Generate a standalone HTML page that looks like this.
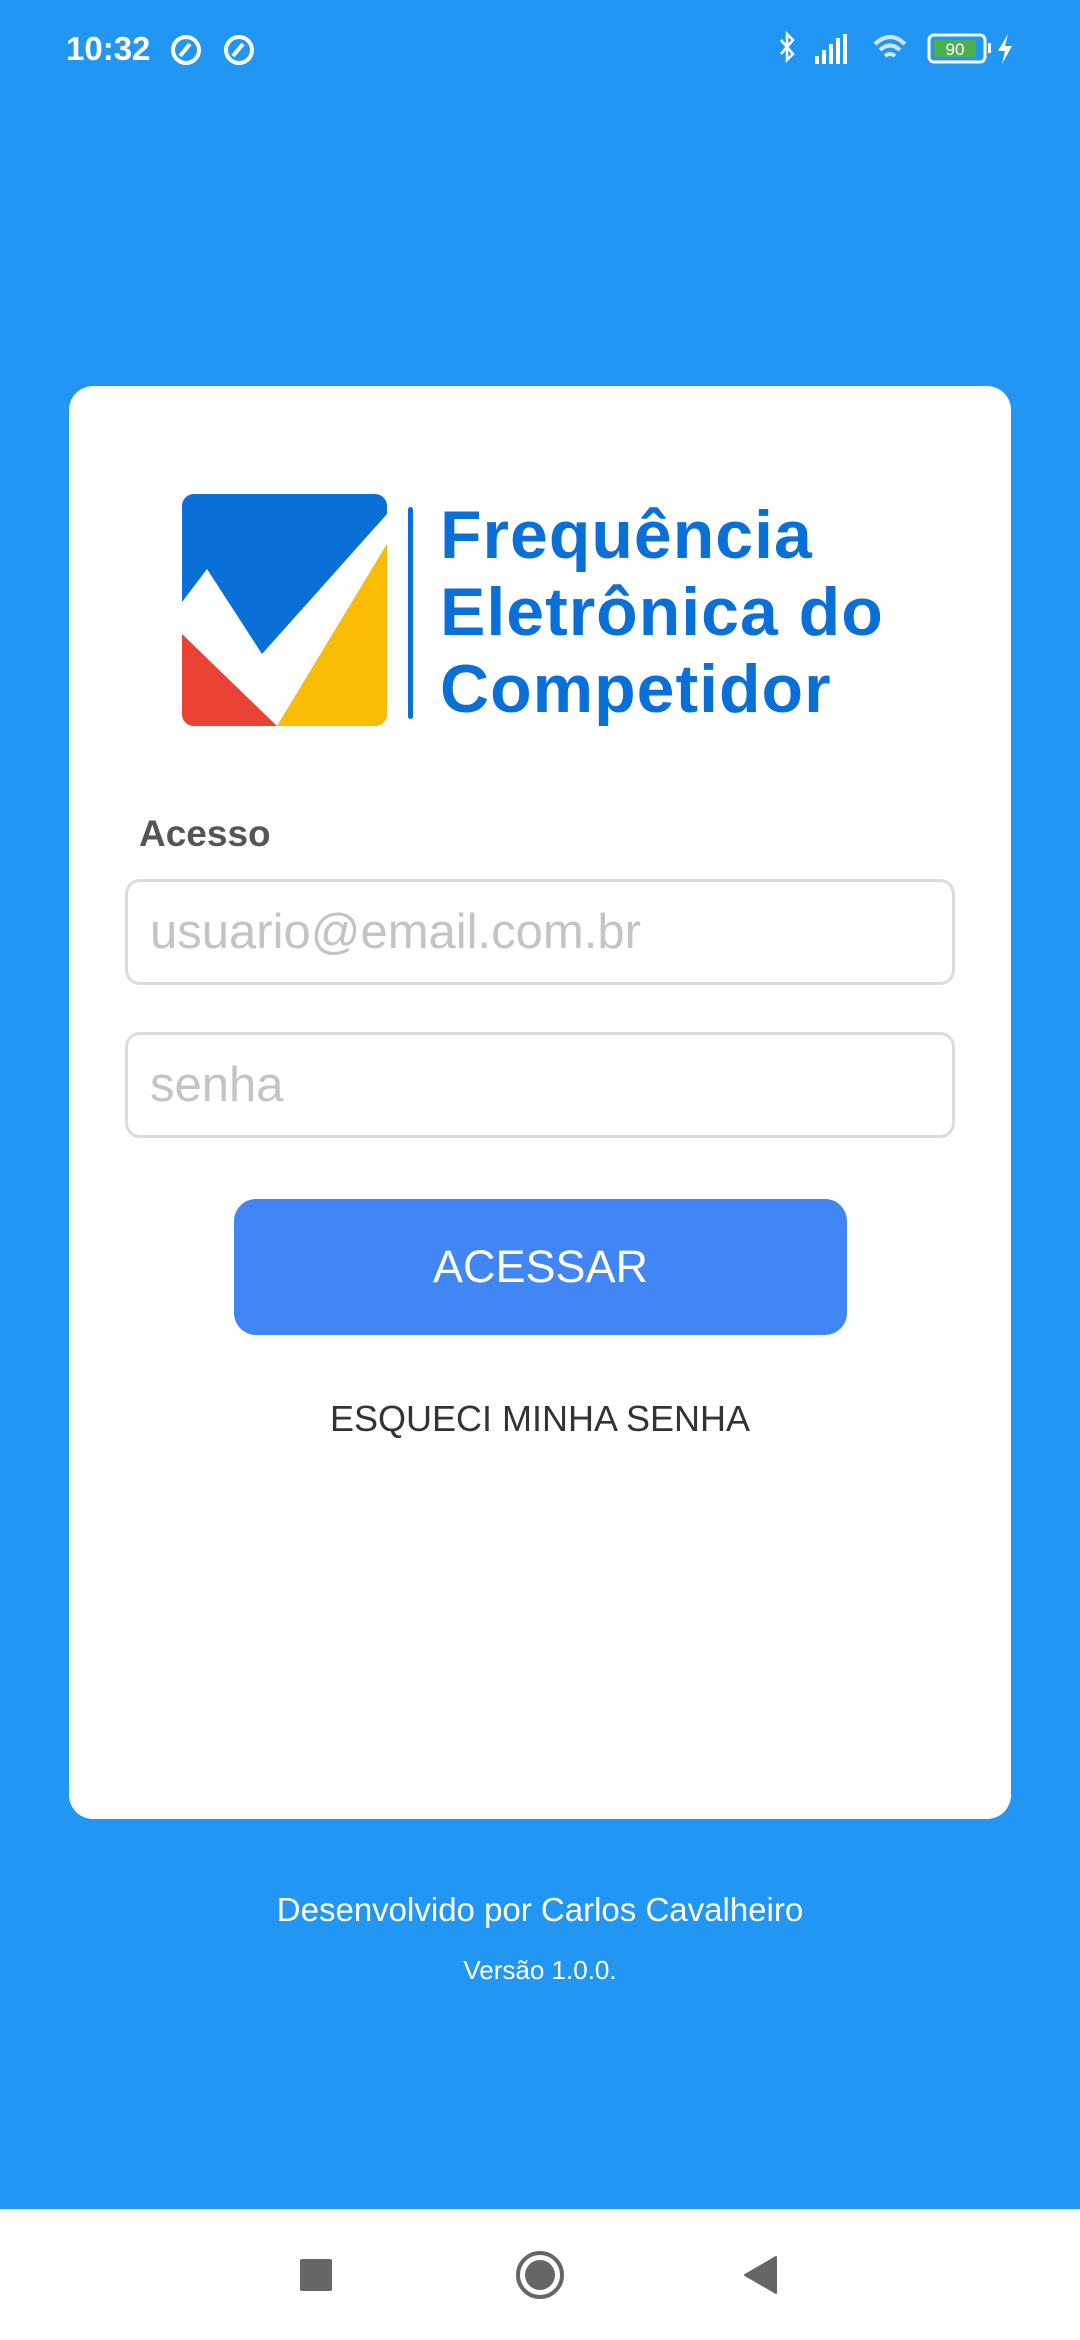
<!DOCTYPE html>
<html><head><meta charset="utf-8"><style>
*{margin:0;padding:0;box-sizing:border-box}
body{width:1080px;height:2340px;background:#2196f3;position:relative;overflow:hidden;font-family:"Liberation Sans",sans-serif}
.a{position:absolute}
.card{left:69px;top:386px;width:942px;height:1433px;background:#fff;border-radius:24px}
.inp{left:125px;width:830px;height:106px;border:3px solid #dcdcdc;border-radius:15px;color:#c4c4c4;font-size:49px;padding-left:22px;line-height:100px}
.logo{color:#0a6fd6;font-weight:bold;font-size:68px;line-height:77px;left:440px;top:497px;letter-spacing:1px;white-space:nowrap}
</style></head><body>
<div class="a" style="left:66px;top:30px;color:#fff;font-weight:bold;font-size:33px">10:32</div>
<svg class="a" style="left:170px;top:32px" width="90" height="36" viewBox="0 0 90 36">
<g fill="none" stroke="#fff" stroke-width="4"><circle cx="16" cy="18" r="13"/><circle cx="69" cy="18" r="13"/><path d="M10 24 L20 12 M63 24 L73 12"/></g></svg>
<svg class="a" style="left:778px;top:30px" width="250" height="40" viewBox="0 0 250 40">
<path d="M3 10 L15 24 L9 30 V4 L15 10 L3 24" fill="none" stroke="#fff" stroke-width="2.5"/>
<g fill="#fff"><rect x="37" y="26" width="4" height="8"/><rect x="44" y="20" width="4" height="14"/><rect x="51" y="14" width="4" height="20"/><rect x="58" y="8" width="4" height="26"/><rect x="65" y="4" width="4" height="30"/></g>
<path d="M97 14 Q112 0 127 14 M102 20 Q112 11 122 20 M107 26 Q112 22 117 26" fill="none" stroke="#cde6fb" stroke-width="4"/>
<rect x="151" y="5" width="56" height="27" rx="5" fill="none" stroke="#fff" stroke-width="3"/>
<rect x="156" y="10" width="42" height="17" fill="#4caf50"/><text x="177" y="25" font-size="17" fill="#fff" text-anchor="middle" font-family="Liberation Sans">90</text>
<rect x="210" y="13" width="3" height="10" fill="#fff"/><path d="M230 4 L220 21 H227 L224 34 L234 16 H227 Z" fill="#fff"/></svg>
<div class="a card"></div>
<svg class="a" style="left:182px;top:494px" width="205" height="232" viewBox="0 0 205 232">
<defs><clipPath id="c"><rect width="205" height="232" rx="12"/></clipPath></defs>
<g clip-path="url(#c)"><rect width="205" height="232" fill="#0a6fd6"/>
<path d="M0 140 L0 232 L95 232 Z" fill="#ea4335"/><path d="M205 50 L205 232 L95 232 Z" fill="#fbbc05"/>
<path d="M0 108 L25 75 L80 160 L205 20 L205 50 L95 232 L0 140 Z" fill="#fff"/></g></svg>
<div class="a" style="left:408px;top:507px;width:5px;height:212px;background:#0a6fd6;border-radius:3px"></div>
<div class="a logo">Frequência<br>Eletrônica do<br>Competidor</div>
<div class="a" style="left:139px;top:813px;font-size:37px;font-weight:bold;color:#555">Acesso</div>
<div class="a inp" style="top:879px">usuario@email.com.br</div>
<div class="a inp" style="top:1032px">senha</div>
<div class="a" style="left:234px;top:1199px;width:613px;height:136px;background:#4285f4;border-radius:22px;color:#fff;font-size:45px;text-align:center;line-height:136px">ACESSAR</div>
<div class="a" style="left:0;width:1080px;top:1398px;text-align:center;font-size:36px;color:#333">ESQUECI MINHA SENHA</div>
<div class="a" style="left:0;width:1080px;top:1891px;text-align:center;font-size:33px;color:#fff">Desenvolvido por Carlos Cavalheiro</div>
<div class="a" style="left:0;width:1080px;top:1955px;text-align:center;font-size:26px;color:#fff">Versão 1.0.0.</div>
<div class="a" style="left:0;top:2209px;width:1080px;height:131px;background:#fff"></div>
<svg class="a" style="left:0;top:2209px" width="1080" height="131" viewBox="0 0 1080 131">
<rect x="300" y="50" width="32" height="32" rx="2" fill="#666"/>
<circle cx="540" cy="66" r="22" fill="none" stroke="#666" stroke-width="4"/><circle cx="540" cy="66" r="15" fill="#666"/>
<path d="M776 48 V84 L745 66 Z" fill="#666" stroke="#666" stroke-width="2" stroke-linejoin="round"/></svg>
</body></html>
